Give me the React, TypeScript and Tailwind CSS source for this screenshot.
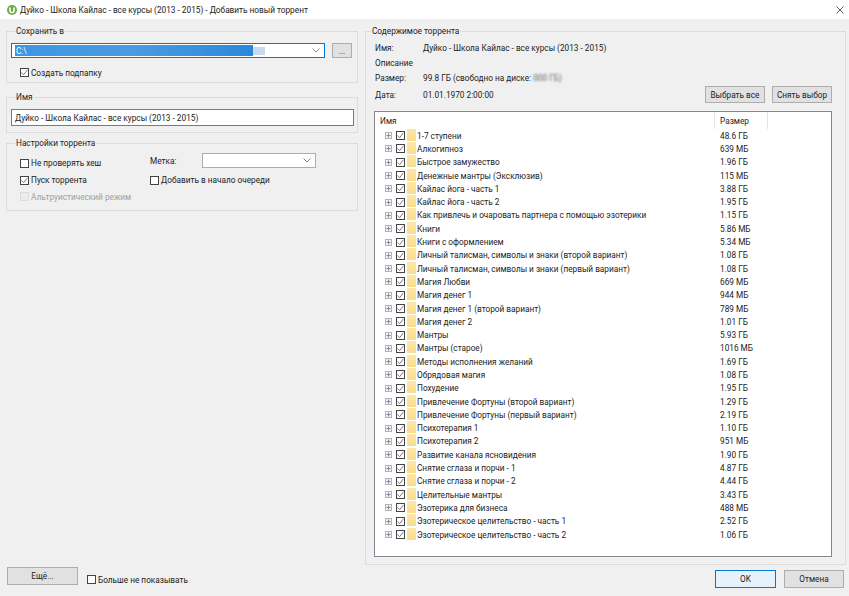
import React from 'react';

const files: [string, string][] = [
  ['1-7 ступени', '48.6 ГБ'],
  ['Алкогипноз', '639 МБ'],
  ['Быстрое замужество', '1.96 ГБ'],
  ['Денежные мантры (Эксклюзив)', '115 МБ'],
  ['Кайлас йога - часть 1', '3.88 ГБ'],
  ['Кайлас йога - часть 2', '1.95 ГБ'],
  ['Как привлечь и очаровать партнера с помощью эзотерики', '1.15 ГБ'],
  ['Книги', '5.86 МБ'],
  ['Книги с оформлением', '5.34 МБ'],
  ['Личный талисман, символы и знаки (второй вариант)', '1.08 ГБ'],
  ['Личный талисман, символы и знаки (первый вариант)', '1.08 ГБ'],
  ['Магия Любви', '669 МБ'],
  ['Магия денег 1', '944 МБ'],
  ['Магия денег 1 (второй вариант)', '789 МБ'],
  ['Магия денег 2', '1.01 ГБ'],
  ['Мантры', '5.93 ГБ'],
  ['Мантры (старое)', '1016 МБ'],
  ['Методы исполнения желаний', '1.69 ГБ'],
  ['Обрядовая магия', '1.08 ГБ'],
  ['Похудение', '1.95 ГБ'],
  ['Привлечение Фортуны (второй вариант)', '1.29 ГБ'],
  ['Привлечение Фортуны (первый вариант)', '2.19 ГБ'],
  ['Психотерапия 1', '1.10 ГБ'],
  ['Психотерапия 2', '951 МБ'],
  ['Развитие канала ясновидения', '1.90 ГБ'],
  ['Снятие сглаза и порчи - 1', '4.87 ГБ'],
  ['Снятие сглаза и порчи - 2', '4.44 ГБ'],
  ['Целительные мантры', '3.43 ГБ'],
  ['Эзотерика для бизнеса', '488 МБ'],
  ['Эзотерическое целительство - часть 1', '2.52 ГБ'],
  ['Эзотерическое целительство - часть 2', '1.06 ГБ'],
];

function Box({ checked, disabled }: { checked?: boolean; disabled?: boolean }) {
  return (
    <span className={`w-[9px] h-[9px] shrink-0 border flex items-center justify-center ${disabled ? 'border-[#dcdcdc] bg-[#ececec]' : 'border-[#444] bg-white'}`}>
      {checked && (
        <svg width="7" height="7" viewBox="0 0 7 7" fill="none">
          <path d="M0.5 3.5 L2.6 5.7 L6.5 0.8" stroke="#555" strokeWidth="0.8" />
        </svg>
      )}
    </span>
  );
}

function Check({ label, checked, disabled }: { label: string; checked?: boolean; disabled?: boolean }) {
  return (
    <label className={`flex items-center gap-[2px] h-[13px] ${disabled ? 'text-[#a0a0a0]' : ''}`}>
      <Box checked={checked} disabled={disabled} />
      <span>{label}</span>
    </label>
  );
}

function Btn({ label, className }: { label: string; className: string }) {
  return (
    <button className={`border border-[#adadad] bg-[#e1e1e1] flex items-center justify-center ${className}`}>{label}</button>
  );
}

function Chevron() {
  return (
    <svg width="8" height="5" viewBox="0 0 8 5" fill="none">
      <path d="M0.5 0.5 L4 4 L7.5 0.5" stroke="#777" strokeWidth="0.9" />
    </svg>
  );
}

function Row({ name, size }: { name: string; size: string }) {
  return (
    <div className="flex items-center h-[13.3px]">
      <span className="ml-[10px] w-[7px] h-[7px] border border-[#b4b4b4] bg-[#f4f4f4] flex items-center justify-center">
        <svg width="5" height="5" viewBox="0 0 5 5"><path d="M0.5 2.5 H4.5 M2.5 0.5 V4.5" stroke="#7a88a8" strokeWidth="1" /></svg>
      </span>
      <span className="ml-[4px]"><Box checked /></span>
      <span className="ml-[2px] w-[9px] h-[12px] -mt-[2px] bg-gradient-to-b from-[#fde7a8] to-[#fbdc88] shrink-0" />
      <span className="ml-[1px] w-[303px] truncate">{name}</span>
      <span>{size}</span>
    </div>
  );
}

export default function App() {
  return (
    <div className="w-[849px] h-[596px] bg-[#f0f0f0] text-[#222] text-[8.25px] leading-[12px] font-['Roboto',sans-serif] flex flex-col overflow-hidden">
      <div className="h-[19px] bg-white flex items-center pl-[7px] pr-[5px] shrink-0">
        <svg width="10" height="10" viewBox="0 0 10 10">
          <circle cx="5" cy="5" r="5" fill="#6cae3f" />
          <path d="M3 2.5 V5.5 A2 2 0 0 0 7 5.5 V2.5" stroke="#fff" strokeWidth="1.6" fill="none" />
        </svg>
        <span className="ml-[3px] flex-1">Дуйко - Школа Кайлас - все курсы (2013 - 2015) - Добавить новый торрент</span>
        <svg width="8" height="8" viewBox="0 0 8 8"><path d="M0.5 0.5 L7.5 7.5 M7.5 0.5 L0.5 7.5" stroke="#333" strokeWidth="0.8" /></svg>
      </div>

      <div className="flex flex-1 pl-[6px] pt-[6px]">
        <div className="w-[352px] flex flex-col shrink-0">
          <fieldset className="border border-[#dcdcdc] h-[58px]">
            <legend className="ml-[8px] px-[1px]">Сохранить в</legend>
            <div className="flex items-center mt-[6px] ml-[4px]">
              <div className="w-[314px] h-[15px] bg-white border border-[#0078d7] flex items-center pr-[4px]">
                <div className="ml-[3px] w-[238px] h-[11px] bg-gradient-to-r from-[#3d96e3] via-[#4a9be0] to-[#2a87da] text-white pl-[1px] flex items-center">C:\</div>
                <div className="w-[12px] h-[8px] bg-[#c5daec]" />
                <span className="ml-auto"><Chevron /></span>
              </div>
              <Btn label="..." className="ml-[7px] w-[20px] h-[15px]" />
            </div>
            <div className="mt-[8px] ml-[13px]"><Check label="Создать подпапку" checked /></div>
          </fieldset>

          <fieldset className="border border-[#dcdcdc] h-[42px] mt-[8px]">
            <legend className="ml-[8px] px-[1px]">Имя</legend>
            <div className="mt-[6px] ml-[4px] w-[343px] h-[17px] bg-white border border-[#7a7a7a] flex items-center pl-[3px]">Дуйко - Школа Кайлас - все курсы (2013 - 2015)</div>
          </fieldset>

          <fieldset className="border border-[#dcdcdc] h-[74px] mt-[4px]">
            <legend className="ml-[8px] px-[1px]">Настройки торрента</legend>
            <div className="ml-[13px]">
              <div className="flex mt-[4px] h-[20px] items-center">
                <div className="w-[130px]"><Check label="Не проверять хеш" /></div>
                <span className="w-[52px] self-start mt-[2px]">Метка:</span>
                <div className="w-[114px] h-[15px] self-start bg-white border border-[#adadad] flex items-center justify-end pr-[4px]"><Chevron /></div>
              </div>
              <div className="flex -mt-[1px] items-center h-[16px]">
                <div className="w-[130px]"><Check label="Пуск торрента" checked /></div>
                <Check label="Добавить в начало очереди" />
              </div>
              <div className="mt-[2px]"><Check label="Альтруистический режим" disabled /></div>
            </div>
          </fieldset>
        </div>

        <fieldset className="ml-[7px] w-[481px] h-[540px] border border-[#dcdcdc] shrink-0">
          <legend className="ml-[5px] px-[1px]">Содержимое торрента</legend>
          <div className="flex flex-col w-[457px] ml-[9px] h-[68px] mt-[4px]">
            <div className="flex h-[14.5px] items-center"><span className="w-[48px]">Имя:</span><span>Дуйко - Школа Кайлас - все курсы (2013 - 2015)</span></div>
            <div className="flex h-[14.5px] items-center"><span>Описание</span></div>
            <div className="flex h-[15px] items-center"><span className="w-[48px]">Размер:</span><span>99.8 ГБ (свободно на диске: <span className="blur-[1.2px] opacity-70">000 ГБ)</span></span></div>
            <div className="flex mt-[1px] items-center">
              <span className="w-[48px]">Дата:</span><span>01.01.1970 2:00:00</span>
              <Btn label="Выбрать все" className="ml-auto w-[60px] h-[17px]" />
              <Btn label="Снять выбор" className="ml-[7px] w-[60px] h-[17px]" />
            </div>
          </div>
          <div className="w-[458px] h-[446px] mt-[2px] ml-[8px] bg-white border border-[#828790]">
            <div className="flex h-[17px] items-center">
              <span className="w-[340px] pl-[5px] h-full flex items-center border-r border-[#e5e5e5]">Имя</span>
              <span className="w-[53px] pl-[5px] h-full flex items-center border-r border-[#e5e5e5]">Размер</span>
            </div>
            <div>
              {files.map(([n, s]) => <Row key={n} name={n} size={s} />)}
            </div>
          </div>
        </fieldset>
      </div>

      <div className="h-[31px] flex items-start shrink-0">
        <Btn label="Ещё..." className="ml-[7px] mt-[2px] w-[71px] h-[18px]" />
        <div className="ml-[9px] mt-[8px]"><Check label="Больше не показывать" /></div>
        <button className="ml-auto mt-[5px] w-[61px] h-[18px] border border-[#0078d7] bg-[#e5f1fb]">OK</button>
        <Btn label="Отмена" className="ml-[8px] mr-[5px] mt-[5px] w-[60px] h-[18px]" />
      </div>
    </div>
  );
}
